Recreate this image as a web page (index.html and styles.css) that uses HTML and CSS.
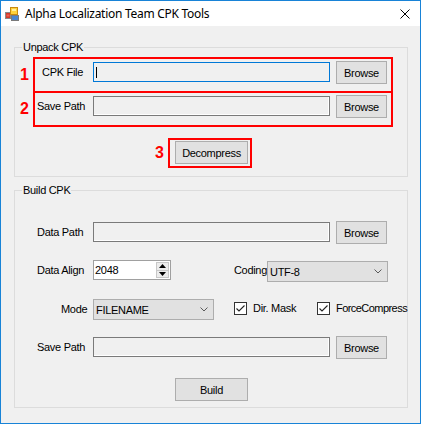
FILE: index.html
```html
<!DOCTYPE html>
<html>
<head>
<meta charset="utf-8">
<link rel="stylesheet" href="styles.css">
</head>
<body>
<div class="window">
  <div class="titlebar">
    <svg class="app-icon" width="16" height="16" viewBox="0 0 16 16">
      <rect x="0.5" y="6.5" width="5" height="6" fill="#d23a2a" stroke="#8a8a8a"/>
      <rect x="1.5" y="8.5" width="3" height="2" fill="#f06050"/>
      <rect x="6.5" y="9.5" width="7" height="5" fill="#4a86d0" stroke="#7a7a7a"/>
      <rect x="5.5" y="1.5" width="7" height="7" fill="#ffd23a" stroke="#c88a10"/>
      <rect x="7" y="3" width="4" height="2" fill="#fff0a0"/>
    </svg>
    <span class="title">Alpha Localization Team CPK Tools</span>
    <svg class="close" width="10" height="10" viewBox="0 0 10 10">
      <path d="M0.5 0.5 L9.5 9.5 M9.5 0.5 L0.5 9.5" stroke="#000" stroke-width="1" fill="none"/>
    </svg>
  </div>
  <div class="client">
    <div class="group unpack">
      <span class="group-title">Unpack CPK</span>
      <div class="anno anno1">
        <span class="num">1</span>
        <div class="redbox wide">
          <div class="field">
            <span class="lbl lbl-cpk">CPK File</span>
            <div class="text focused"><span class="caret"></span></div>
            <div class="btn">Browse</div>
          </div>
        </div>
      </div>
      <div class="anno anno2">
        <span class="num">2</span>
        <div class="redbox wide">
          <div class="field">
            <span class="lbl lbl-save">Save Path</span>
            <div class="text"></div>
            <div class="btn">Browse</div>
          </div>
        </div>
      </div>
      <div class="anno anno3">
        <span class="num">3</span>
        <div class="redbox btnbox">
          <div class="btn btn-wide">Decompress</div>
        </div>
      </div>
    </div>

    <div class="group build">
      <span class="group-title">Build CPK</span>
      <div class="row r-datapath">
        <span class="lbl blbl">Data Path</span>
        <div class="text"></div>
        <div class="btn">Browse</div>
      </div>
      <div class="row r-align">
        <span class="lbl blbl">Data Align</span>
        <div class="numeric">
          <span class="num-val">2048</span>
          <div class="spin">
            <div class="spin-btn"><svg width="7" height="4" viewBox="0 0 7 4"><path d="M0 4 L3.5 0 L7 4 Z" fill="#000"/></svg></div>
            <div class="spin-btn"><svg width="7" height="4" viewBox="0 0 7 4"><path d="M0 0 L3.5 4 L7 0 Z" fill="#000"/></svg></div>
          </div>
        </div>
        <span class="lbl coding-lbl">Coding</span>
        <div class="combo combo-coding">
          <span class="combo-val">UTF-8</span>
          <svg class="chev" width="8" height="5" viewBox="0 0 8 5"><path d="M0.5 0.5 L4 4 L7.5 0.5" stroke="#5a5a5a" fill="none"/></svg>
        </div>
      </div>
      <div class="row r-mode">
        <span class="lbl blbl mode-lbl">Mode</span>
        <div class="combo combo-mode">
          <span class="combo-val">FILENAME</span>
          <svg class="chev" width="8" height="5" viewBox="0 0 8 5"><path d="M0.5 0.5 L4 4 L7.5 0.5" stroke="#5a5a5a" fill="none"/></svg>
        </div>
        <div class="check check1">
          <span class="box"><svg width="11" height="11" viewBox="0 0 11 11"><path d="M1.5 5.5 L4 8 L9.5 2.5" stroke="#222" stroke-width="1.1" fill="none"/></svg></span>
          <span class="check-lbl">Dir. Mask</span>
        </div>
        <div class="check check2">
          <span class="box"><svg width="11" height="11" viewBox="0 0 11 11"><path d="M1.5 5.5 L4 8 L9.5 2.5" stroke="#222" stroke-width="1.1" fill="none"/></svg></span>
          <span class="check-lbl force-lbl">ForceCompress</span>
        </div>
      </div>
      <div class="row r-save">
        <span class="lbl blbl">Save Path</span>
        <div class="text"></div>
        <div class="btn">Browse</div>
      </div>
      <div class="row r-build">
        <div class="btn btn-wide">Build</div>
      </div>
    </div>
  </div>
</div>
</body>
</html>
```
FILE: styles.css
```css
* { box-sizing: border-box; }
html, body { margin: 0; padding: 0; }
body {
  width: 421px;
  height: 424px;
  overflow: hidden;
  background: #f0f0f0;
  font-family: "Liberation Sans", Arial, sans-serif;
  font-size: 11px;
  letter-spacing: -0.3px;
  color: #000;
}
.window {
  width: 421px;
  height: 424px;
  border: 1px solid #1883d7;
  background: #f0f0f0;
  display: flex;
  flex-direction: column;
}
.titlebar {
  flex: none;
  height: 25px;
  background: #fff;
  display: flex;
  align-items: center;
  padding-left: 4px;
}
.app-icon { flex: none; display: block; }
.title {
  margin-left: 4px;
  font-family: "Noto Sans", "Open Sans", sans-serif;
  font-size: 12px;
  letter-spacing: -0.28px;
  white-space: nowrap;
}
.close { margin-left: auto; margin-right: 10px; display: block; }

.client {
  flex: 1;
  padding: 21px 12px 0 13px;
}
.group {
  width: 394px;
  border: 1px solid #dcdcdc;
}
.unpack { height: 130px; }
.build { height: 218px; margin-top: 13px; }
.group-title {
  display: block;
  width: max-content;
  height: 13px;
  line-height: 13px;
  margin: -7px 0 0 7px;
  padding: 0 1px;
  background: #f0f0f0;
}

/* annotation rows */
.anno { display: flex; align-items: center; padding-left: 3px; }
.anno1 { margin-top: 3px; }
.anno2 { margin-top: -2px; }
.anno3 { margin-top: 11px; padding-left: 138px; }
.num {
  flex: none;
  width: 13px;
  margin-right: 2px;
  text-align: center;
  color: #f00;
  font-weight: bold;
  font-size: 16px;
  line-height: 16px;
  letter-spacing: 0;
}
.redbox { border: 2px solid #f00; flex: none; }
.redbox.wide { width: 360px; height: 36px; padding-top: 2px; }
.redbox.btnbox { width: 84px; height: 30px; padding: 1px 0 0 5px; }

/* fields */
.field, .row { display: flex; align-items: flex-start; }
.lbl {
  flex: none;
  height: 20px;
  line-height: 20px;
  margin-top: 1px;
  white-space: nowrap;
}
.lbl-cpk { width: 58px; padding-left: 7px; }
.lbl-save { width: 58px; padding-left: 2px; }
.blbl { width: 78px; padding-left: 22px; }
.mode-lbl { padding-left: 46px; }

.text {
  flex: none;
  width: 237px;
  height: 20px;
  margin-top: 1px;
  border: 1px solid #7a7a7a;
  background: #f0f0f0;
  box-shadow: inset -1px -1px 0 #fff;
}
.text.focused { border-color: #0078d7; box-shadow: none; }
.caret {
  display: block;
  width: 1px;
  height: 11px;
  margin: 4px 0 0 2px;
  background: #000;
}
.btn {
  flex: none;
  width: 51px;
  height: 23px;
  margin-left: 6px;
  border: 1px solid #adadad;
  background: #e1e1e1;
  display: flex;
  align-items: center;
  justify-content: center;
  white-space: nowrap;
}
.btn-wide { width: 73px; margin-left: 0; }

/* build rows */
.r-datapath { margin-top: 24px; height: 23px; }
.r-align { margin-top: 16px; height: 22px; }
.r-align .lbl { margin-top: 0; }
.r-mode { margin-top: 17px; height: 21px; }
.r-mode .lbl { margin-top: 0; height: 21px; line-height: 21px; }
.r-save { margin-top: 16px; height: 23px; }
.r-build { margin-top: 19px; padding-left: 160px; }

.numeric {
  flex: none;
  width: 78px;
  height: 20px;
  border: 1px solid #a0a0a0;
  background: #fff;
  display: flex;
  align-items: stretch;
}
.num-val { flex: 1; padding-left: 1px; line-height: 18px; }
.spin {
  flex: none;
  width: 14px;
  display: flex;
  flex-direction: column;
  padding: 1px 1px 1px 0;
}
.spin-btn {
  flex: 1;
  border: 1px solid #c8c8c8;
  background: #ececec;
  display: flex;
  align-items: center;
  justify-content: center;
}
.spin-btn + .spin-btn { margin-top: -1px; }
.spin-btn svg { display: block; }

.coding-lbl { margin-left: auto; width: auto; padding: 0; }
.combo {
  flex: none;
  width: 121px;
  height: 21px;
  border: 1px solid #adadad;
  background: #e1e1e1;
  display: flex;
  align-items: center;
  padding: 0 5px 0 2px;
}
.combo-coding { margin-top: 1px; margin-right: 19px; }
.combo-val { flex: 1; white-space: nowrap; }
.chev { flex: none; display: block; }

.check { flex: none; display: flex; align-items: flex-start; }
.check1 { margin-left: 20px; width: 83px; }
.check2 { width: 90px; }
.box {
  flex: none;
  width: 13px;
  height: 13px;
  margin-top: 3px;
  border: 1px solid #333;
  background: #fff;
}
.box svg { display: block; }
.check-lbl {
  margin-left: 6px;
  line-height: 19px;
  height: 19px;
  white-space: nowrap;
  background: #f0f0f0;
  position: relative;
}
.force-lbl { letter-spacing: -0.55px; }
```
